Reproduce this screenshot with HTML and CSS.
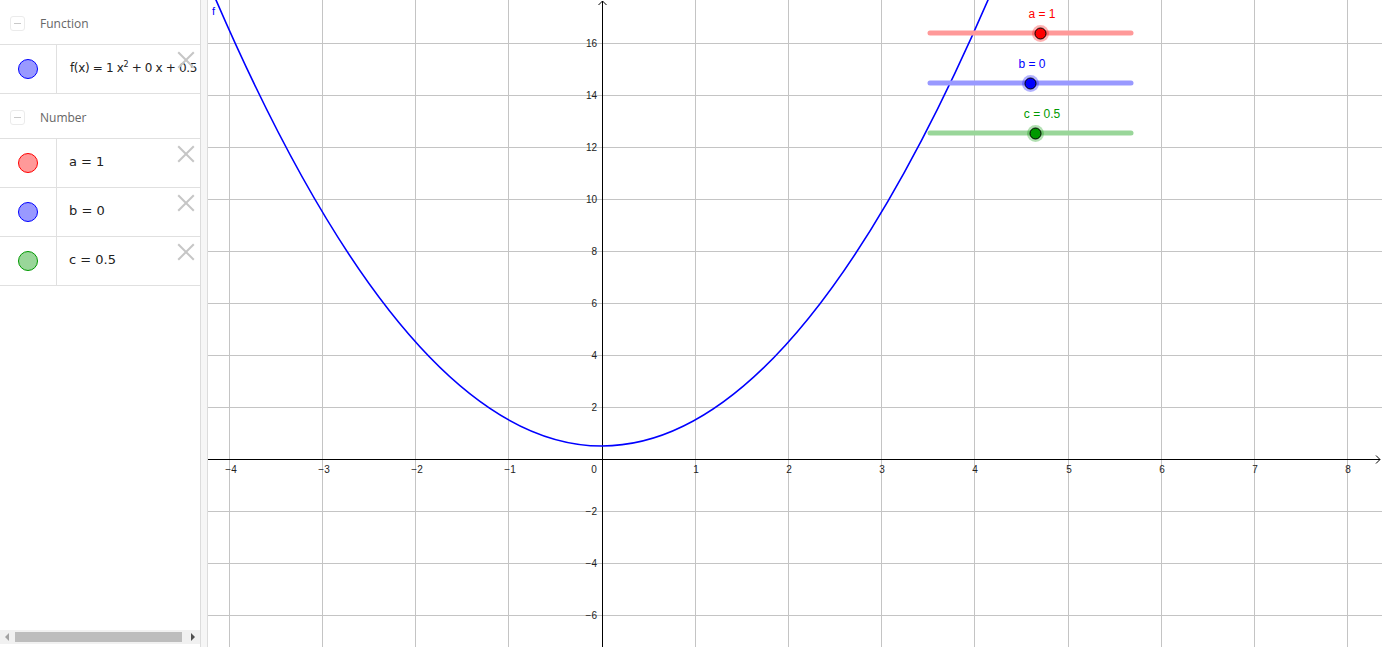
FILE: index.html
```html
<!DOCTYPE html>
<html>
<head>
<meta charset="utf-8">
<link rel="stylesheet" href="styles.css">
</head>
<body>
<div class="app">
  <div class="panel">
    <div class="list">
      <div class="group">
        <span class="collapse"></span>
        <span class="group-name">Function</span>
      </div>
      <div class="item">
        <div class="marker"><span class="dot dot-blue"></span></div>
        <div class="formula formula-long">f(x) = 1 x<sup>2</sup> + 0 x + 0.5</div>
        <span class="close"></span>
      </div>
      <div class="group">
        <span class="collapse"></span>
        <span class="group-name">Number</span>
      </div>
      <div class="item">
        <div class="marker"><span class="dot dot-red"></span></div>
        <div class="formula">a = 1</div>
        <span class="close"></span>
      </div>
      <div class="item">
        <div class="marker"><span class="dot dot-blue"></span></div>
        <div class="formula">b = 0</div>
        <span class="close"></span>
      </div>
      <div class="item">
        <div class="marker"><span class="dot dot-green"></span></div>
        <div class="formula">c = 0.5</div>
        <span class="close"></span>
      </div>
    </div>
    <div class="hscroll">
      <span class="arrow arrow-left"></span>
      <span class="thumb"></span>
      <span class="arrow arrow-right"></span>
    </div>
  </div>
  <div class="divider"></div>
  <div class="graph">
    <svg class="plot" width="1174" height="647" viewBox="208 0 1174 647" xmlns="http://www.w3.org/2000/svg">
      <g class="grid">
        <line x1="229.5" y1="0" x2="229.5" y2="647"/>
        <line x1="322.5" y1="0" x2="322.5" y2="647"/>
        <line x1="415.5" y1="0" x2="415.5" y2="647"/>
        <line x1="508.5" y1="0" x2="508.5" y2="647"/>
        <line x1="695.5" y1="0" x2="695.5" y2="647"/>
        <line x1="788.5" y1="0" x2="788.5" y2="647"/>
        <line x1="881.5" y1="0" x2="881.5" y2="647"/>
        <line x1="974.5" y1="0" x2="974.5" y2="647"/>
        <line x1="1068.5" y1="0" x2="1068.5" y2="647"/>
        <line x1="1161.5" y1="0" x2="1161.5" y2="647"/>
        <line x1="1254.5" y1="0" x2="1254.5" y2="647"/>
        <line x1="1347.5" y1="0" x2="1347.5" y2="647"/>
        <line x1="208" y1="43.5" x2="1382" y2="43.5"/>
        <line x1="208" y1="95.5" x2="1382" y2="95.5"/>
        <line x1="208" y1="147.5" x2="1382" y2="147.5"/>
        <line x1="208" y1="199.5" x2="1382" y2="199.5"/>
        <line x1="208" y1="251.5" x2="1382" y2="251.5"/>
        <line x1="208" y1="303.5" x2="1382" y2="303.5"/>
        <line x1="208" y1="355.5" x2="1382" y2="355.5"/>
        <line x1="208" y1="407.5" x2="1382" y2="407.5"/>
        <line x1="208" y1="511.5" x2="1382" y2="511.5"/>
        <line x1="208" y1="563.5" x2="1382" y2="563.5"/>
        <line x1="208" y1="615.5" x2="1382" y2="615.5"/>
      </g>
      <g class="axes">
        <line x1="208" y1="459.5" x2="1380" y2="459.5"/>
        <polyline points="1376,455.5 1380,459.5 1376,463.5"/>
        <line x1="602.5" y1="647" x2="602.5" y2="1"/>
        <polyline points="598.5,5 602.5,1 606.5,5"/>
      </g>
      <g class="xlabels">
        <text x="231" y="473">−4</text>
        <text x="324" y="473">−3</text>
        <text x="417" y="473">−2</text>
        <text x="510" y="473">−1</text>
        <text x="594" y="473">0</text>
        <text x="696" y="473">1</text>
        <text x="789" y="473">2</text>
        <text x="882" y="473">3</text>
        <text x="975" y="473">4</text>
        <text x="1069" y="473">5</text>
        <text x="1162" y="473">6</text>
        <text x="1255" y="473">7</text>
        <text x="1348" y="473">8</text>
      </g>
      <g class="ylabels">
        <text x="597" y="47">16</text>
        <text x="597" y="99">14</text>
        <text x="597" y="151">12</text>
        <text x="597" y="203">10</text>
        <text x="597" y="255">8</text>
        <text x="597" y="307">6</text>
        <text x="597" y="359">4</text>
        <text x="597" y="411">2</text>
        <text x="597" y="515">−2</text>
        <text x="597" y="567">−4</text>
        <text x="597" y="619">−6</text>
      </g>
      <path class="curve" d="M 205.9 -23.6 Q 602 915.6 998.1 -23.6"/>
      <text class="fname" x="212" y="15">f</text>

      <g class="slider">
        <text class="slabel s-red" x="1042" y="18">a = 1</text>
        <line class="track t-red" x1="930" y1="33" x2="1131" y2="33"/>
        <circle class="halo h-red" cx="1040.5" cy="33.5" r="8.5"/>
        <circle class="knob k-red" cx="1040.5" cy="33.5" r="5.5"/>
      </g>
      <g class="slider">
        <text class="slabel s-blue" x="1032" y="68">b = 0</text>
        <line class="track t-blue" x1="930" y1="83" x2="1131" y2="83"/>
        <circle class="halo h-blue" cx="1030.5" cy="83.5" r="8.5"/>
        <circle class="knob k-blue" cx="1030.5" cy="83.5" r="5.5"/>
      </g>
      <g class="slider">
        <text class="slabel s-green" x="1042" y="118">c = 0.5</text>
        <line class="track t-green" x1="930" y1="133" x2="1131" y2="133"/>
        <circle class="halo h-green" cx="1035.5" cy="133.5" r="8.5"/>
        <circle class="knob k-green" cx="1035.5" cy="133.5" r="5.5"/>
      </g>
    </svg>
  </div>
</div>
</body>
</html>
```

FILE: styles.css
```css
html, body {
  margin: 0;
  padding: 0;
  background: #ffffff;
  overflow: hidden;
}

.app {
  display: flex;
  width: 1382px;
  height: 647px;
}

.panel {
  width: 200px;
  flex-shrink: 0;
  border-right: 1px solid #dcdcdc;
  display: flex;
  flex-direction: column;
  background: #ffffff;
  overflow: hidden;
}

.list {
  flex: 1;
}

.group {
  height: 44px;
  border-bottom: 1px solid #e0e0e0;
  display: flex;
  align-items: center;
  position: relative;
}

.collapse {
  width: 13px;
  height: 13px;
  border: 1px solid #ebebeb;
  border-radius: 3px;
  margin-left: 10px;
  margin-right: 15px;
  margin-top: 2px;
  position: relative;
  box-sizing: content-box;
}

.collapse::after {
  content: "";
  position: absolute;
  left: 3px;
  right: 3px;
  top: 6px;
  height: 1px;
  background: #c8c8c8;
}

.group-name {
  font-family: "Open Sans", "Liberation Sans", sans-serif;
  font-size: 12px;
  color: #666666;
  margin-top: 2px;
}

.item {
  height: 48px;
  border-bottom: 1px solid #e0e0e0;
  display: flex;
  position: relative;
}

.marker {
  width: 56px;
  flex-shrink: 0;
  border-right: 1px solid #e0e0e0;
  display: flex;
  align-items: center;
  justify-content: center;
}

.dot {
  width: 18px;
  height: 18px;
  border-radius: 50%;
  display: block;
}

.dot-blue {
  background: #9999ff;
  border: 1px solid #0000ff;
}

.dot-red {
  background: #ff9999;
  border: 1px solid #ff0000;
}

.dot-green {
  background: #99d699;
  border: 1px solid #009900;
}

.formula {
  flex-shrink: 0;
  padding-left: 12px;
  line-height: 46px;
  font-family: "DejaVu Sans", sans-serif;
  font-size: 13px;
  color: #222222;
  white-space: pre;
}

.formula-long {
  padding-left: 13px;
  font-size: 12px;
  letter-spacing: -0.35px;
}

.formula sup {
  font-size: 8px;
  line-height: 0;
  vertical-align: 5px;
}

.close {
  position: absolute;
  right: 6px;
  top: 7px;
  width: 16px;
  height: 16px;
}

.close::before,
.close::after {
  content: "";
  position: absolute;
  left: -3px;
  top: 7px;
  width: 22px;
  height: 2px;
  background: #c6c6c6;
  transform: rotate(45deg);
}

.close::after {
  transform: rotate(-45deg);
}

.hscroll {
  height: 14px;
  margin-bottom: 3px;
  background: #f1f1f1;
  position: relative;
}

.thumb {
  position: absolute;
  left: 15px;
  right: 18px;
  top: 2px;
  bottom: 2px;
  background: #bdbdbd;
}

.arrow {
  position: absolute;
  top: 3px;
  width: 0;
  height: 0;
  border-top: 4px solid transparent;
  border-bottom: 4px solid transparent;
}

.arrow-left {
  left: 5px;
  border-right: 4px solid #a3a3a3;
}

.arrow-right {
  right: 5px;
  border-left: 4px solid #505050;
}

.divider {
  width: 6px;
  flex-shrink: 0;
  background: #f6f6f6;
  border-right: 1px solid #dcdcdc;
}

.graph {
  flex: 1;
  position: relative;
  overflow: hidden;
}

.plot {
  display: block;
}

.grid line {
  stroke: #c4c4c4;
  stroke-width: 1;
}

.axes line,
.axes polyline {
  stroke: #000000;
  stroke-width: 1;
  fill: none;
}

.xlabels text,
.ylabels text {
  font-family: "Liberation Sans", sans-serif;
  font-size: 10px;
  fill: #222222;
}

.xlabels text {
  text-anchor: middle;
}

.ylabels text {
  text-anchor: end;
}

.curve {
  fill: none;
  stroke: #0000ff;
  stroke-width: 1.6;
}

.fname {
  font-family: "Liberation Sans", sans-serif;
  font-size: 11px;
  fill: #0000ff;
}

.slabel {
  font-family: "Liberation Sans", sans-serif;
  font-size: 12px;
  text-anchor: middle;
}

.s-red { fill: #ff0000; }
.s-blue { fill: #0000ff; }
.s-green { fill: #009900; }

.track {
  stroke-width: 5;
  stroke-linecap: round;
}

.t-red { stroke: #ff9999; }
.t-blue { stroke: #9999ff; }
.t-green { stroke: #99d699; }

.halo { stroke: none; }
.h-red { fill: rgba(255, 0, 0, 0.3); }
.h-blue { fill: rgba(0, 0, 255, 0.3); }
.h-green { fill: rgba(0, 153, 0, 0.3); }

.knob {
  stroke: #000000;
  stroke-width: 1;
}

.k-red { fill: #ff0000; }
.k-blue { fill: #0000ff; }
.k-green { fill: #009900; }
```
